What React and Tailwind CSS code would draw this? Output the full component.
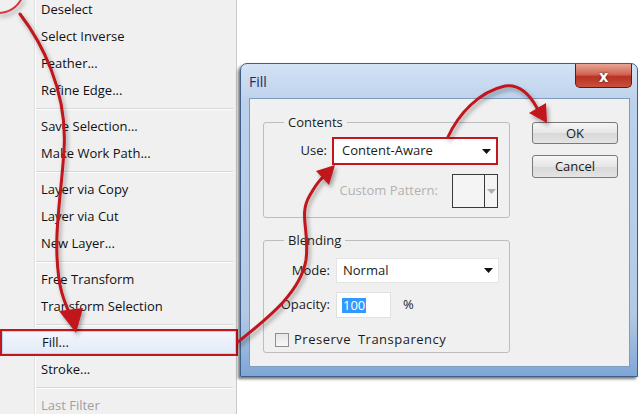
import React from 'react';

const menu = [
  'Deselect', 'Select Inverse', 'Feather...', 'Refine Edge...', '-',
  'Save Selection...', 'Make Work Path...', '-',
  'Layer via Copy', 'Layer via Cut', 'New Layer...', '-',
  'Free Transform', 'Transform Selection', '-',
  'Fill...', 'Stroke...', '-', 'Last Filter',
];

function Menu() {
  return (
    <div className="w-[237px] h-full shrink-0 border-r border-[#c9c9c9] bg-[linear-gradient(to_right,#f0f0f0_34px,#e0e0e0_34px,#e0e0e0_35px,#ffffff_35px,#ffffff_36px,#f0f0f0_36px)]">
      <div className="-mt-[4px] flex flex-col">
        {menu.map((item, i) => {
          if (item === '-') {
            return (
              <div key={i} className="h-[9px] flex flex-col justify-center pl-[36px] pr-[3px]">
                <div className="border-t border-[#d7d7d7] border-b border-b-white" />
              </div>
            );
          }
          if (item === 'Fill...') {
            return (
              <div key={i} className="h-[27px] -mr-[2px] border-2 border-[#c4161c] bg-white">
                <div className="h-full flex items-center pl-[39px] border border-[#b9d3f3] bg-[linear-gradient(to_bottom,#f2f6fc,#e2ebf7)] text-[13px] text-[#111]">
                  {item}
                </div>
              </div>
            );
          }
          return (
            <div key={i} className={`h-[27px] flex items-center pl-[41px] text-[13px] ${item === 'Last Filter' ? 'text-[#a0a0a0]' : 'text-[#111]'}`}>
              {item}
            </div>
          );
        })}
      </div>
    </div>
  );
}

function Caret({ color = '#111' }) {
  return (
    <svg width="9" height="5" viewBox="0 0 9 5">
      <path d="M0 0 H9 L4.5 5 Z" fill={color} />
    </svg>
  );
}

function Group({ label, className, children }) {
  return (
    <div className={`relative w-[247px] border border-[#bdbdbd] rounded-[3px] ${className}`}>
      <div className="absolute -top-[10px] left-[20px] px-[4px] bg-[#f0f0f0] text-[13px] text-[#1b1b1b] leading-[18px]">
        {label}
      </div>
      {children}
    </div>
  );
}

function Dialog() {
  return (
    <div className="w-[398px] h-[314px] rounded-t-[7px] border border-[#3f5f86] bg-[linear-gradient(to_bottom,#d4e3f5,#bcd1eb_12%,#b3cae6_80%,#7fa6d6)] flex flex-col shadow-[-2px_2px_3px_rgba(0,0,0,0.55)]">
      <div className="h-[34px] flex items-center pl-[8px]">
        <span className="text-[14px] text-[#1f2a5e]">Fill</span>
        <div className="ml-auto mr-[5px] self-start w-[57px] h-[24px] rounded-b-[5px] border border-t-0 border-[#5c1d16] bg-[linear-gradient(to_bottom,#e8a594,#d06553_45%,#b83222_55%,#c8503c)] flex items-center justify-center">
          <span className="text-[16px] font-bold text-white leading-none [text-shadow:0_0_2px_#3a0a05]">x</span>
        </div>
      </div>
      <div className="flex-1 ml-[8px] mr-[7px] mb-[9px] bg-[#f0f0f0] border border-[#7f9bbd] flex pl-[13px] pt-[23px]">
        <div className="flex flex-col">
          <Group label="Contents" className="h-[96px] pt-[14px]">
            <div className="flex justify-end items-center pr-[11px] gap-[5px]">
              <span className="text-[13px] text-[#1b1b1b]">Use:</span>
              <div className="w-[166px] h-[28px] border-2 border-[#c4161c] bg-white flex items-center pl-[8px] pr-[5px] justify-between">
                <span className="text-[13px] text-[#1b1b1b]">Content-Aware</span>
                <Caret />
              </div>
            </div>
            <div className="mt-[9px] flex justify-end items-center pr-[11px] gap-[14px]">
              <span className="text-[13px] text-[#b2b2b2]">Custom Pattern:</span>
              <div className="w-[46px] h-[34px] border border-[#3a3a3a] bg-[#f4f4f4] flex">
                <div className="w-[32px] border-r border-[#3a3a3a]" />
                <div className="flex-1 flex items-center justify-center">
                  <Caret color="#b0b0b0" />
                </div>
              </div>
            </div>
          </Group>
          <Group label="Blending" className="mt-[22px] h-[113px] pt-[17px]">
            <div className="flex items-center gap-[6px]">
              <span className="w-[66px] text-right text-[13px] text-[#1b1b1b]">Mode:</span>
              <div className="w-[163px] h-[25px] bg-white border border-[#e4e4e4] flex items-center justify-between pl-[6px] pr-[5px]">
                <span className="text-[13px] text-[#1b1b1b]">Normal</span>
                <Caret />
              </div>
            </div>
            <div className="mt-[9px] flex items-center gap-[6px]">
              <span className="w-[66px] text-right text-[13px] text-[#1b1b1b]">Opacity:</span>
              <div className="w-[55px] h-[26px] bg-white border border-[#e0e0e0] flex items-center pl-[5px]">
                <span className="text-[13px] text-white bg-[#3399ff] px-[1px] leading-[15px]">100</span>
              </div>
              <span className="ml-[6px] text-[13px] text-[#1b1b1b]">%</span>
            </div>
            <div className="mt-[12px] flex items-center pl-[11px] gap-[5px]">
              <div className="w-[14px] h-[14px] border border-[#8f8f8f] bg-[linear-gradient(to_bottom,#e6e6e6,#f8f8f8)]" />
              <span className="text-[13px] tracking-[0.5px] [word-spacing:3px] text-[#1b1b1b]">Preserve Transparency</span>
            </div>
          </Group>
        </div>
        <div className="ml-[22px] flex flex-col">
          <button className="w-[86px] h-[22px] rounded-[3px] border border-[#7a7a7a] bg-[linear-gradient(to_bottom,#f6f6f6,#e6e6e6_50%,#d8d8d8_51%,#e4e4e4)] text-[13px] text-[#1b1b1b] leading-none">
            OK
          </button>
          <button className="mt-[11px] w-[86px] h-[23px] rounded-[3px] border border-[#7a7a7a] bg-[linear-gradient(to_bottom,#f6f6f6,#e6e6e6_50%,#d8d8d8_51%,#e4e4e4)] text-[13px] text-[#1b1b1b] leading-none">
            Cancel
          </button>
        </div>
      </div>
    </div>
  );
}

function Arrows() {
  const red = '#c0141b';
  return (
    <svg className="absolute inset-0 pointer-events-none" width="640" height="414" viewBox="0 0 640 414">
      <defs>
        <filter id="sh" x="-20%" y="-20%" width="140%" height="140%">
          <feDropShadow dx="2" dy="3" stdDeviation="2" floodColor="#000" floodOpacity="0.35" />
        </filter>
      </defs>
      <g filter="url(#sh)" fill="none" stroke={red} strokeWidth="3" strokeLinecap="round">
        <path d="M-2 13 Q14 13 22 -2" stroke="#d23a3f" strokeWidth="2" />
        <path d="M20 14 C40 40 68 90 64 150 C61 200 52 240 60 285 C63 300 66 306 70 314" />
        <path d="M238 342 C262 322 300 295 306 260 C310 230 298 215 310 195 C314 188 317 183 322 178" />
        <path d="M448 137 C458 115 478 92 505 86 C520 84 530 95 537 108" />
      </g>
      <g filter="url(#sh)" fill={red}>
        <polygon points="59,311 83,308 76,333" />
        <polygon points="316,171 329,185 335,165" />
        <polygon points="529,113 546,103 547,123" />
      </g>
    </svg>
  );
}

export default function App() {
  return (
    <div className="relative w-[640px] h-[414px] overflow-hidden bg-white flex font-['Open_Sans',sans-serif]">
      <Menu />
      <div className="ml-[3px] mt-[63px]">
        <Dialog />
      </div>
      <Arrows />
    </div>
  );
}
